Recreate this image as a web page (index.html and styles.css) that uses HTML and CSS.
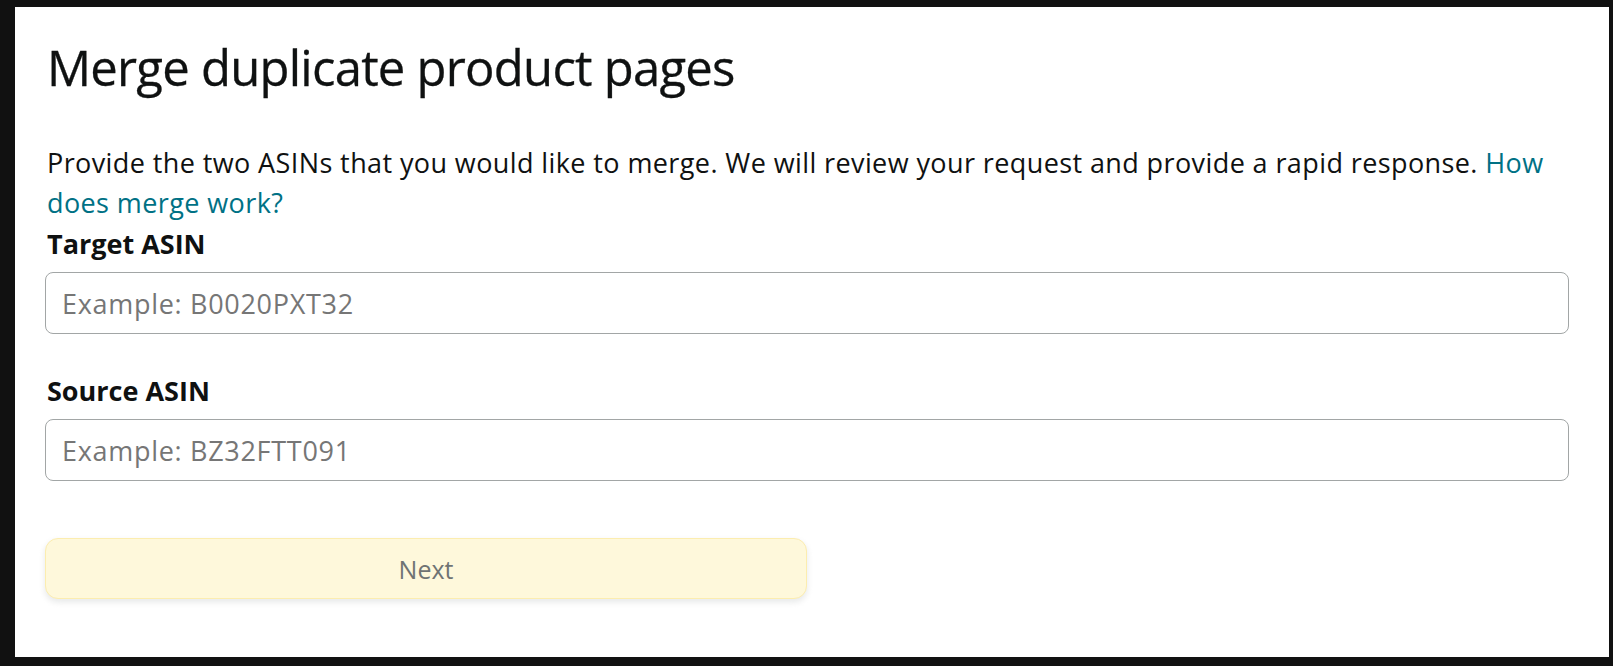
FILE: index.html
```html
<!DOCTYPE html>
<html lang="en">
<head>
<meta charset="utf-8">
<title>Merge duplicate product pages</title>
<link rel="stylesheet" href="styles.css">
</head>
<body>
<main class="panel">
  <h1 class="title">Merge duplicate product pages</h1>
  <p class="intro">Provide the two ASINs that you would like to merge. We will review your request and provide a rapid response. <a class="link" href="#">How does merge work?</a></p>
  <label class="label" for="target">Target ASIN</label>
  <input class="field" id="target" type="text" placeholder="Example: B0020PXT32">
  <label class="label label-second" for="source">Source ASIN</label>
  <input class="field" id="source" type="text" placeholder="Example: BZ32FTT091">
  <button class="next" type="button">Next</button>
</main>
</body>
</html>
```

FILE: styles.css
```css
html, body {
  margin: 0;
  padding: 0;
  background: #111111;
}
body {
  width: 1613px;
  height: 666px;
  overflow: hidden;
  font-family: "Open Sans", "Noto Sans", "Liberation Sans", sans-serif;
  color: #0f1111;
}
.panel {
  display: flex;
  flex-direction: column;
  align-items: stretch;
  box-sizing: border-box;
  margin: 7px 4px 0 15px;
  width: 1594px;
  height: 650px;
  background: #ffffff;
  padding: 28px 40px 0 30px;
}
.title {
  margin: 0;
  font-size: 49px;
  line-height: 64px;
  font-weight: 400;
  letter-spacing: -0.75px;
  padding-left: 2px;
  -webkit-text-stroke: 0.3px #0f1111;
}
.intro {
  margin: 44px 0 0 0;
  font-size: 27px;
  line-height: 40px;
  letter-spacing: 0.4px;
  padding-left: 2px;
}
.link {
  color: #007185;
  text-decoration: none;
}
.label {
  display: block;
  margin-top: 1px;
  font-size: 27px;
  line-height: 40px;
  font-weight: 700;
  padding-left: 2px;
}
.label-second {
  margin-top: 37px;
}
.field {
  display: block;
  box-sizing: border-box;
  margin: 8px 0 0 0;
  width: 100%;
  height: 62px;
  border: 1.5px solid #a2a6a6;
  border-radius: 8px;
  padding: 0 16px;
  font-family: inherit;
  font-size: 27px;
  letter-spacing: 0.7px;
  color: #0f1111;
  background: #ffffff;
  outline: none;
}
.field::placeholder {
  color: #767676;
}
.next {
  margin-top: 57px;
  width: 50%;
  height: 61px;
  box-sizing: border-box;
  border: 1.5px solid #fcedaf;
  border-radius: 13px;
  background: #fef8db;
  box-shadow: 0 3px 6px rgba(213, 217, 217, 0.6);
  font-family: inherit;
  font-size: 25px;
  color: #6f7373;
  cursor: default;
}
```
